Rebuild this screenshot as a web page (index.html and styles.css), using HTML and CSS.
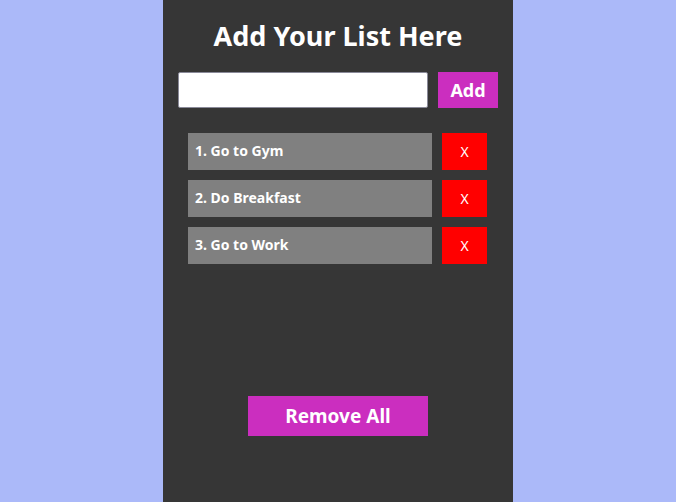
FILE: index.html
```html
<!DOCTYPE html>
<html>
<head>
<meta charset="utf-8">
<link rel="stylesheet" href="styles.css">
</head>
<body>
<div class="app">
  <h1 class="title">Add Your List Here</h1>
  <div class="entry">
    <input class="field" type="text">
    <button class="add">Add</button>
  </div>
  <ul class="list">
    <li class="row"><span class="item">1. Go to Gym</span><button class="del">X</button></li>
    <li class="row"><span class="item">2. Do Breakfast</span><button class="del">X</button></li>
    <li class="row"><span class="item">3. Go to Work</span><button class="del">X</button></li>
  </ul>
  <button class="clear">Remove All</button>
</div>
</body>
</html>
```

FILE: styles.css
```css
html, body {
  margin: 0;
  padding: 0;
}
body {
  background: #abb9f9;
  display: flex;
  justify-content: center;
  font-family: "Noto Sans", "Open Sans", sans-serif;
}
.app {
  width: 350px;
  height: 502px;
  background: #363636;
  display: flex;
  flex-direction: column;
  align-items: center;
  box-sizing: border-box;
  padding-top: 20px;
}
.title {
  margin: 0;
  font-size: 27px;
  line-height: 32px;
  font-weight: 700;
  color: #ffffff;
}
.entry {
  display: flex;
  gap: 10px;
  margin-top: 20px;
  width: 320px;
}
.field {
  width: 250px;
  height: 36px;
  box-sizing: border-box;
  border: 1px solid #8a8a99;
  border-radius: 2px;
  background: #ffffff;
  margin: 0;
  padding: 0 6px;
}
.add {
  width: 60px;
  height: 36px;
  border: none;
  margin: 0;
  background: #cb2ebf;
  color: #ffffff;
  font-family: inherit;
  font-size: 18px;
  font-weight: 700;
  padding: 0;
}
.list {
  list-style: none;
  margin: 25px 0 0;
  padding: 0;
  display: flex;
  flex-direction: column;
  gap: 10px;
  width: 300px;
}
.row {
  display: flex;
  gap: 10px;
  height: 37px;
}
.item {
  width: 244px;
  box-sizing: border-box;
  background: #808080;
  color: #ffffff;
  font-size: 14px;
  font-weight: 700;
  padding-left: 7px;
  line-height: 36px;
}
.del {
  width: 45px;
  height: 37px;
  border: none;
  margin: 0;
  padding: 0;
  background: #ff0000;
  color: #ffffff;
  font-family: inherit;
  font-size: 14px;
}
.clear {
  margin-top: 132px;
  width: 180px;
  height: 40px;
  border: none;
  padding: 0;
  background: #cb2ebf;
  color: #ffffff;
  font-family: inherit;
  font-size: 19px;
  font-weight: 700;
}
```
